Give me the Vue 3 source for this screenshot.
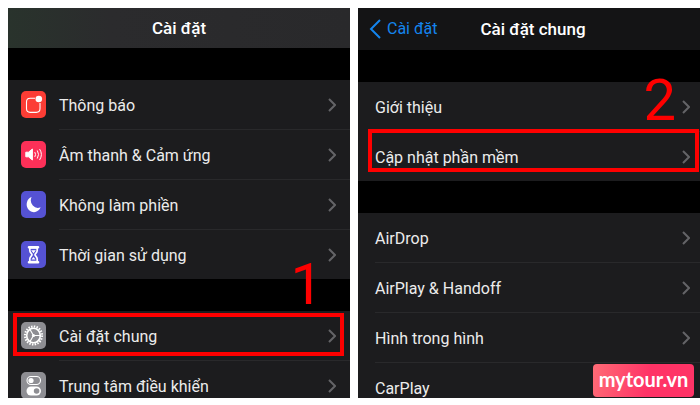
<script setup>
const settingsGroups = [
  [
    { icon: 'notifications', label: 'Thông báo' },
    { icon: 'sound', label: 'Âm thanh & Cảm ứng' },
    { icon: 'moon', label: 'Không làm phiền' },
    { icon: 'hourglass', label: 'Thời gian sử dụng' }
  ],
  [
    { icon: 'gear', label: 'Cài đặt chung', marked: true },
    { icon: 'switches', label: 'Trung tâm điều khiển' }
  ]
];

const generalGroups = [
  [
    { label: 'Giới thiệu' },
    { label: 'Cập nhật phần mềm', marked: true }
  ],
  [
    { label: 'AirDrop' },
    { label: 'AirPlay & Handoff' },
    { label: 'Hình trong hình' },
    { label: 'CarPlay' }
  ]
];
</script>

<template>
  <main class="guide">
    <section class="screen settings">
      <header class="bar">
        <h1>Cài đặt</h1>
      </header>
      <nav v-for="(group, g) in settingsGroups" :key="g" class="group">
        <a v-for="item in group" :key="item.label" href="#" class="row">
          <span class="icon" :class="item.icon">
            <svg v-if="item.icon === 'notifications'" viewBox="0 0 25 27">
              <path d="M14 7.2H9.2Q5.5 7.2 5.5 11V17.6Q5.5 21.4 9.2 21.4H15.3Q19 21.4 19 17.6V12" fill="none" stroke="#fff" stroke-width="1.1" />
              <circle cx="17.8" cy="8" r="3.3" fill="#fff" />
            </svg>
            <svg v-else-if="item.icon === 'sound'" viewBox="0 0 25 27">
              <path d="M4.8 11.2H7.5L11.4 8V19L7.5 15.8H4.8Z" fill="#fff" stroke="#fff" stroke-linejoin="round" />
              <path d="M14 11.4Q15.4 13.5 14 15.6M16.5 9.8Q18.8 13.5 16.5 17.2M18.8 8.4Q22.2 13.5 18.8 18.6" fill="none" stroke="#fff" stroke-linecap="round" />
            </svg>
            <svg v-else-if="item.icon === 'moon'" viewBox="0 0 25 27">
              <path d="M10.6 6A7.2 7.8 0 1 0 19.6 16.2A7 7.5 0 0 1 10.6 6Z" fill="#fff" />
            </svg>
            <svg v-else-if="item.icon === 'hourglass'" viewBox="0 0 25 27">
              <path d="M8 6.2H17M8 21.2H17" stroke="#fff" stroke-width="2.6" stroke-linecap="round" />
              <path d="M8.8 7V9.5C8.8 12 11 12.4 11 13.7S8.8 15.5 8.8 18V20.5H16.2V18C16.2 15.5 14 15 14 13.7S16.2 12 16.2 9.5V7Z" fill="none" stroke="#fff" stroke-width="1.7" />
              <path d="M10.2 9.3H14.8L12.5 12.2ZM12.5 16L14.5 18.6H10.5Z" fill="#fff" />
            </svg>
            <svg v-else-if="item.icon === 'gear'" viewBox="0 0 25 27">
              <ellipse cx="12.5" cy="13.5" rx="8.5" ry="9" fill="none" stroke="#fff" stroke-width="2.2" stroke-dasharray="1.5 1.25" />
              <ellipse cx="12.5" cy="13.5" rx="6.8" ry="7.3" fill="none" stroke="#fff" stroke-width="1.6" />
              <path d="M12.5 13.5H19M12.5 13.5L9 7.5M12.5 13.5L9 19.5" stroke="#fff" stroke-width="1.2" />
              <circle cx="12.5" cy="13.5" r="1.6" fill="#fff" />
            </svg>
            <svg v-else viewBox="0 0 25 27">
              <rect x="6" y="4.5" width="13.5" height="8" rx="4" fill="none" stroke="#fff" stroke-width="1.1" />
              <circle cx="10" cy="8.5" r="2.6" fill="#fff" />
              <rect x="5.5" y="14.5" width="14.5" height="9" rx="4.5" fill="#fff" />
              <circle cx="15.6" cy="19" r="2.8" fill="#8e8e93" />
            </svg>
          </span>
          <span class="label">{{ item.label }}</span>
          <svg class="chevron" viewBox="0 0 8 14"><path d="M1 1L7 7L1 13" /></svg>
          <span v-if="item.marked" class="mark"></span>
          <span v-if="item.marked" class="step">1</span>
        </a>
      </nav>
    </section>

    <section class="screen general">
      <header class="bar">
        <a href="#" class="back">
          <svg viewBox="0 0 12 20"><path d="M11 1L2 10L11 19" /></svg>
          Cài đặt
        </a>
        <h1>Cài đặt chung</h1>
      </header>
      <nav v-for="(group, g) in generalGroups" :key="g" class="group">
        <a v-for="item in group" :key="item.label" href="#" class="row">
          <span class="label">{{ item.label }}</span>
          <svg class="chevron" viewBox="0 0 8 14"><path d="M1 1L7 7L1 13" /></svg>
          <span v-if="item.marked" class="mark"></span>
          <span v-if="item.marked" class="step">2</span>
        </a>
      </nav>
      <div class="brand">mytour.vn</div>
    </section>
  </main>
</template>

<style>
body {
  margin: 0;
  background: #fff;
}
</style>

<style scoped>
.guide {
  box-sizing: border-box;
  height: 100vh;
  padding: 8px 0 7px 8px;
  display: grid;
  grid-template-columns: 1fr 1fr;
  gap: 8px;
  font-family: Roboto, "Liberation Sans", sans-serif;
  font-size: 16px;
  line-height: 24px;
}

.screen {
  position: relative;
  min-width: 0;
  overflow: hidden;
  background: #000;
  color: #ececec;
}

.bar {
  display: grid;
  grid-template-columns: 1fr auto 1fr;
  align-items: center;
  height: 40px;
  background: linear-gradient(90deg, #29332c, #2b2b2d 30%, #29292b);
}

.bar h1 {
  grid-column: 2;
  margin: 0;
  font-size: 17px;
  font-weight: 500;
  color: #fff;
}

.general .bar {
  height: 42px;
  padding-left: 8px;
  background: #141415;
}

.back {
  display: flex;
  align-items: center;
  gap: 6px;
  padding-left: 3px;
  color: #1485ee;
  text-decoration: none;
}

.back svg {
  width: 12px;
  height: 20px;
  fill: none;
  stroke: #1485ee;
  stroke-width: 2;
}

.group {
  margin-top: 32px;
  background: #1c1c1e;
}

.row {
  position: relative;
  display: flex;
  align-items: center;
  height: 49px;
  padding: 0 14px 0 13px;
  color: inherit;
  text-decoration: none;
}

.general .row {
  padding: 0 10px 0 17px;
}

.row + .row {
  border-top: 1px solid #1c1c1e;
}

.row + .row::before {
  content: "";
  position: absolute;
  top: -1px;
  left: 51px;
  right: 0;
  height: 1px;
  background: #29292b;
}

.general .row + .row::before {
  left: 17px;
}

.icon {
  width: 25px;
  height: 27px;
  margin-right: 13px;
  border-radius: 5px;
}

.icon svg {
  display: block;
}

.notifications {
  background: #fc3d35;
}

.sound {
  background: #fc3058;
}

.moon,
.hourglass {
  background: #5552d3;
}

.gear,
.switches {
  background: #8e8e93;
}

.label {
  flex: 1;
  padding-top: 2px;
}

.chevron {
  width: 8px;
  height: 14px;
  fill: none;
  stroke: #646467;
  stroke-width: 2;
}

.mark {
  position: absolute;
  top: 2px;
  bottom: 4px;
  left: 5px;
  right: 6px;
  border: 4px solid #fe0000;
}

.general .mark {
  top: -3px;
  bottom: 9px;
  left: 10px;
  right: 1px;
}

.step {
  position: absolute;
  right: 27px;
  bottom: 48px;
  font-size: 58px;
  line-height: 56px;
  color: #fe0000;
}

.general .step {
  right: 24px;
  bottom: 53px;
}

.brand {
  position: absolute;
  right: 6px;
  bottom: 1px;
  width: 101px;
  height: 33px;
  border-radius: 4px;
  background: linear-gradient(100deg, #ff6b76, #ff3366 55%);
  color: #fff;
  font-family: Lato, sans-serif;
  font-size: 20px;
  font-weight: 700;
  line-height: 30px;
  text-align: center;
}
</style>
